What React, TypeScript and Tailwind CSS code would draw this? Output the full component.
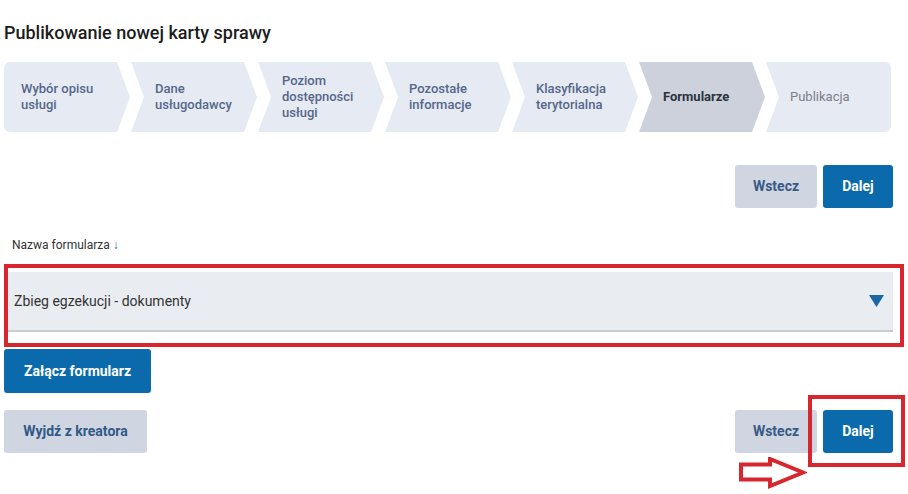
import { ReactNode } from 'react';

type StepState = 'done' | 'current' | 'todo';

interface Step {
  label: ReactNode;
  state: StepState;
}

const steps: Step[] = [
  { label: <>Wybór opisu<br />usługi</>, state: 'done' },
  { label: <>Dane<br />usługodawcy</>, state: 'done' },
  { label: <>Poziom<br />dostępności<br />usługi</>, state: 'done' },
  { label: <>Pozostałe<br />informacje</>, state: 'done' },
  { label: <>Klasyfikacja<br />terytorialna</>, state: 'done' },
  { label: 'Formularze', state: 'current' },
  { label: 'Publikacja', state: 'todo' },
];

function StepItem({ step, index, last }: { step: Step; index: number; last: boolean }) {
  const shape = index === 0
    ? 'rounded-l-[6px] [clip-path:polygon(0_0,calc(100%-13px)_0,100%_50%,calc(100%-13px)_100%,0_100%)] pl-[17px]'
    : last
      ? 'rounded-r-[6px] [clip-path:polygon(0_0,100%_0,100%_100%,0_100%,13px_50%)] pl-[24px]'
      : '[clip-path:polygon(0_0,calc(100%-13px)_0,100%_50%,calc(100%-13px)_100%,0_100%,13px_50%)] pl-[24px]';

  const tone =
    step.state === 'current'
      ? 'bg-[#ccd1db] text-[#2b333d] font-bold'
      : step.state === 'todo'
        ? 'bg-[#e6eaf2] text-[#7b808a] font-normal'
        : 'bg-[#e6eaf2] text-[#56678a] font-medium';

  return (
    <div className={`flex h-[70px] items-center text-[13px] leading-[16px] ${last ? 'w-[125px]' : 'w-[126px]'} ${shape} ${tone}`}>
      <span>{step.label}</span>
    </div>
  );
}

function NavButtons() {
  return (
    <div className="flex gap-[6px]">
      <button className="h-[43px] w-[82px] rounded-[3px] bg-[#cfd6e1] text-[14px] font-bold text-[#3a5a86]">Wstecz</button>
      <button className="h-[43px] w-[70px] rounded-[3px] bg-[#0b6aab] text-[14px] font-bold text-white">Dalej</button>
    </div>
  );
}

export default function App() {
  return (
    <div className="min-h-[494px] w-[908px] bg-white pl-[4px] pr-[15px] pt-[22px] font-['Roboto','Liberation_Sans',sans-serif] text-[#333]">
      <h1 className="text-[18px] font-medium leading-[22px] text-[#1c1c1c]">Publikowanie nowej karty sprawy</h1>

      <div className="mt-[18px] flex gap-[1px]">
        {steps.map((step, i) => (
          <StepItem key={i} step={step} index={i} last={i === steps.length - 1} />
        ))}
      </div>

      <div className="mt-[33px] flex justify-end">
        <NavButtons />
      </div>

      <p className="mt-[29px] pl-[8px] text-[12px] leading-[16px] text-[#333]">
        Nazwa formularza <span className="text-[#1a6cb0]">↓</span>
      </p>

      <div className="-mr-[11px] mt-[11px] border-4 border-[#d8262e] pb-[11px] pr-[7px] pt-[4px]">
        <div className="flex h-[60px] items-center justify-between border-b-2 border-[#c9cdd3] bg-[#e9edf1] pl-[6px] pr-[9px]">
          <span className="text-[14px] text-[#333]">Zbieg egzekucji - dokumenty</span>
          <svg width="15" height="12" viewBox="0 0 15 12">
            <polygon points="0,0 15,0 7.5,12" fill="#1a67a6" />
          </svg>
        </div>
      </div>

      <button className="mt-[2px] h-[44px] w-[147px] rounded-[3px] bg-[#0b6aab] text-[14px] font-bold text-white">Załącz formularz</button>

      <div className="relative mt-[17px] flex items-center justify-between">
        <button className="h-[43px] w-[143px] rounded-[3px] bg-[#cfd6e1] text-[14px] font-bold text-[#2f5a89]">Wyjdź z kreatora</button>
        <NavButtons />
        <div className="pointer-events-none absolute left-[804px] top-[-15px] h-[72px] w-[97px] border-4 border-[#d8262e]" />
        <svg className="pointer-events-none absolute left-[735px] top-[47px]" width="68" height="32" viewBox="0 0 68 32">
          <polygon points="2,7.5 31,7.5 31,2 64,15.5 31,29 31,22.5 2,22.5" fill="white" stroke="#d8262e" strokeWidth="4" strokeLinejoin="miter" />
        </svg>
      </div>
    </div>
  );
}
